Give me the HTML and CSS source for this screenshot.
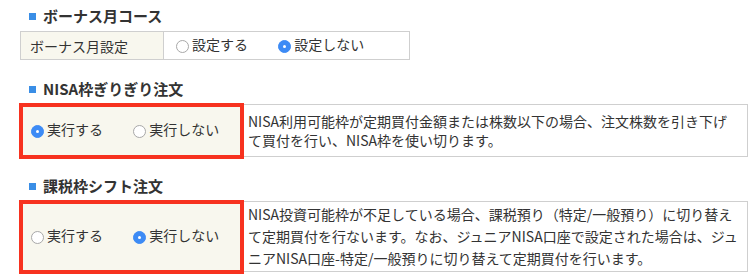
FILE: index.html
```html
<!DOCTYPE html>
<html>
  <head>
    <title>定期買付設定</title>
    <link rel="stylesheet" href="styles.css">
  </head>
  <body>
    <div class="container">
      <div class="section">
        <h2 class="heading">ボーナス月コース</h2>
        <table class="setting bonus">
          <tr>
            <th class="label-cell">ボーナス月設定</th>
            <td class="radio-cell">
              <label class="opt"><span class="radio"></span>設定する</label>
              <label class="opt"><span class="radio checked"></span>設定しない</label>
            </td>
          </tr>
        </table>
      </div>

      <div class="section">
        <h2 class="heading">NISA枠ぎりぎり注文</h2>
        <table class="setting wide">
          <tr>
            <td class="choice-cell marked">
              <label class="opt"><span class="radio checked"></span>実行する</label>
              <label class="opt"><span class="radio"></span>実行しない</label>
            </td>
            <td class="desc-cell">NISA利用可能枠が定期買付金額または株数以下の場合、注文株数を引き下げて買付を行い、NISA枠を使い切ります。</td>
          </tr>
        </table>
      </div>

      <div class="section">
        <h2 class="heading">課税枠シフト注文</h2>
        <table class="setting wide">
          <tr>
            <td class="choice-cell marked">
              <label class="opt"><span class="radio"></span>実行する</label>
              <label class="opt"><span class="radio checked"></span>実行しない</label>
            </td>
            <td class="desc-cell">NISA投資可能枠が不足している場合、課税預り（特定/一般預り）に切り替えて定期買付を行ないます。なお、ジュニアNISA口座で設定された場合は、ジュニアNISA口座-特定/一般預りに切り替えて定期買付を行います。</td>
          </tr>
        </table>
      </div>
    </div>
  </body>
</html>
```

FILE: styles.css
```css
* {
  box-sizing: border-box;
}

body {
  margin: 0;
  padding: 0;
  background-color: #fff;
  color: #333;
  font-family: "Noto Sans CJK JP", "Noto Sans", sans-serif;
  font-size: 14px;
}

.container {
  padding: 6px 8px 0 20px;
}

.section {
  margin-bottom: 19px;
}

.heading {
  display: flex;
  align-items: center;
  margin: 0 0 5px 9px;
  height: 20px;
  font-size: 15px;
  font-weight: bold;
  line-height: 20px;
  color: #333;
}

.heading::before {
  content: "";
  display: inline-block;
  width: 7px;
  height: 7px;
  margin-right: 7px;
  background-color: #3a8ee6;
}

.setting {
  border-collapse: collapse;
}

.setting th,
.setting td {
  border: 1px solid #cfcfcf;
  font-weight: normal;
  text-align: left;
  vertical-align: middle;
}

.bonus {
  width: 390px;
}

.wide {
  width: 728px;
}

.label-cell {
  width: 143px;
  height: 28px;
  padding: 0 9px;
  background-color: #f8f7ee;
  line-height: 20px;
}

.radio-cell {
  padding: 0 12px;
  line-height: 20px;
}

.choice-cell {
  width: 221px;
  padding: 0 10px;
  background-color: #f8f7ee;
  white-space: nowrap;
  line-height: 20px;
}

.marked {
  outline: 4px solid #f7321f;
  outline-offset: -2px;
}

.desc-cell {
  padding: 4px 6px 4px 6px;
  line-height: 21px;
}

.section:nth-child(2) .desc-cell {
  height: 52px;
  line-height: 19px;
}

.section:nth-child(3) .desc-cell {
  line-height: 22px;
  padding: 1px 6px 2px 6px;
}

.opt {
  display: inline-flex;
  align-items: center;
  margin-right: 27px;
}

.opt:last-child {
  margin-right: 0;
}

.radio {
  position: relative;
  display: inline-block;
  width: 13px;
  height: 13px;
  margin: 4px 3px 0 0;
  border: 1px solid #a8a8a8;
  border-radius: 50%;
  background-color: #fff;
}

.radio.checked {
  border-color: #3d8bf5;
  background-color: #3d8bf5;
}

.radio.checked::after {
  content: "";
  position: absolute;
  left: 4px;
  top: 4px;
  width: 3px;
  height: 3px;
  border-radius: 50%;
  background-color: #fff;
}
```
